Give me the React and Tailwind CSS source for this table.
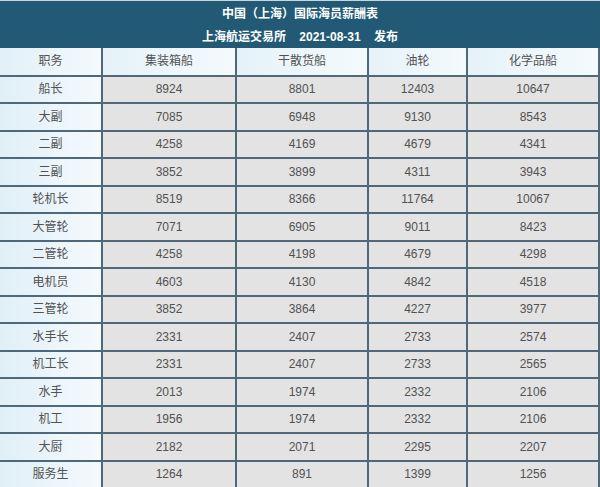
const COLS = ["集装箱船", "干散货船", "油轮", "化学品船"];

const ROWS = [
  ["船长", 8924, 8801, 12403, 10647],
  ["大副", 7085, 6948, 9130, 8543],
  ["二副", 4258, 4169, 4679, 4341],
  ["三副", 3852, 3899, 4311, 3943],
  ["轮机长", 8519, 8366, 11764, 10067],
  ["大管轮", 7071, 6905, 9011, 8423],
  ["二管轮", 4258, 4198, 4679, 4298],
  ["电机员", 4603, 4130, 4842, 4518],
  ["三管轮", 3852, 3864, 4227, 3977],
  ["水手长", 2331, 2407, 2733, 2574],
  ["机工长", 2331, 2407, 2733, 2565],
  ["水手", 2013, 1974, 2332, 2106],
  ["机工", 1956, 1974, 2332, 2106],
  ["大厨", 2182, 2071, 2295, 2207],
  ["服务生", 1264, 891, 1399, 1256],
];

const font = { fontFamily: '"Liberation Sans", "Noto Sans CJK SC", sans-serif' };

export default function App() {
  return (
    <div className="h-[487px] w-[600px] overflow-hidden bg-white" style={font}>
      <div className="flex h-[48px] flex-col items-center border-t border-[#c9d6de] bg-[#225a76] pt-[4px] text-[12px] font-bold text-white">
        <div className="leading-[19px]">中国（上海）国际海员薪酬表</div>
        <div className="mt-[4px] leading-[19px]">
          上海航运交易所&nbsp;&nbsp;&nbsp;&nbsp;2021-08-31&nbsp;&nbsp;&nbsp;&nbsp;发布
        </div>
      </div>
      <table className="w-[600px] table-fixed border-collapse text-[12px] text-[#525252]">
        <colgroup>
          <col className="w-[102px]" />
          <col className="w-[134px]" />
          <col className="w-[132px]" />
          <col className="w-[99px]" />
          <col />
        </colgroup>
        <thead>
          <tr className="h-[27.5px]">
            <th className="border-2 border-l-0 border-t-0 border-[#50697a] bg-gradient-to-r from-[#e2f0f7] to-[#f4fafd] font-normal">职务</th>
            {COLS.map((c) => (
              <th key={c} className="border-2 border-t-0 border-[#50697a] bg-gradient-to-r from-[#e6f2f8] to-[#f4fafd] font-normal">
                {c}
              </th>
            ))}
          </tr>
        </thead>
        <tbody>
          {ROWS.map(([name, ...vals]) => (
            <tr key={name} className="h-[27.5px]">
              <td className="border-2 border-l-0 border-[#50697a] bg-gradient-to-r from-[#e0eff7] to-[#f4fafd] p-0 text-center">
                {name}
              </td>
              {vals.map((v, i) => (
                <td key={i} className="border-2 border-[#50697a] bg-[#e3e3e3] p-0 text-center">
                  {v}
                </td>
              ))}
            </tr>
          ))}
        </tbody>
      </table>
    </div>
  );
}
